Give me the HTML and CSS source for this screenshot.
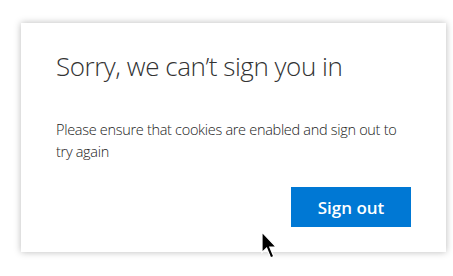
FILE: index.html
```html
<!DOCTYPE html>
<html>
<head>
<meta charset="utf-8">
<link rel="stylesheet" href="styles.css">
</head>
<body>
<div class="card">
  <h1 class="title">Sorry, we can’t sign you in</h1>
  <p class="message">Please ensure that cookies are enabled and sign out to try again</p>
  <div class="actions">
    <button class="btn">Sign out</button>
  </div>
</div>
<svg class="cursor" width="17" height="29" viewBox="0 0 17 29">
  <path d="M1 1 L1 21.5 L5.6 17 L9.6 26.8 L12.8 25.5 L8.8 16 L15.2 16 Z" fill="#000" stroke="#fff" stroke-width="1.2" stroke-linejoin="miter"/>
</svg>
</body>
</html>
```
FILE: styles.css
```css
html, body {
  margin: 0;
  padding: 0;
  background: #fff;
}
body {
  width: 453px;
  height: 276px;
  position: relative;
  overflow: hidden;
  font-family: "Open Sans", "Noto Sans", sans-serif;
  color: #1b1b1b;
}
.card {
  margin: 23px 0 0 21px;
  width: 425px;
  height: 229px;
  box-sizing: border-box;
  padding: 27px 35px 25px 35px;
  background: #fff;
  box-shadow: 0 0 7px rgba(0,0,0,0.28);
  display: flex;
  flex-direction: column;
}
.title {
  margin: 0;
  font-size: 26px;
  font-weight: 300;
  line-height: 32px;
  color: #333;
  letter-spacing: -0.45px;
}
.message {
  margin: 37px 0 0 0;
  font-size: 14.5px;
  font-weight: 300;
  line-height: 22px;
  color: #222;
  letter-spacing: -0.3px;
}
.actions {
  display: flex;
  justify-content: flex-end;
  margin-top: auto;
}
.btn {
  width: 120px;
  height: 40px;
  border: none;
  background: #0078d4;
  color: #fff;
  font-family: "Open Sans", "Noto Sans", sans-serif;
  font-size: 17px;
  font-weight: 600;
  padding: 0;
}
.cursor {
  position: absolute;
  left: 261px;
  top: 231px;
}
```
